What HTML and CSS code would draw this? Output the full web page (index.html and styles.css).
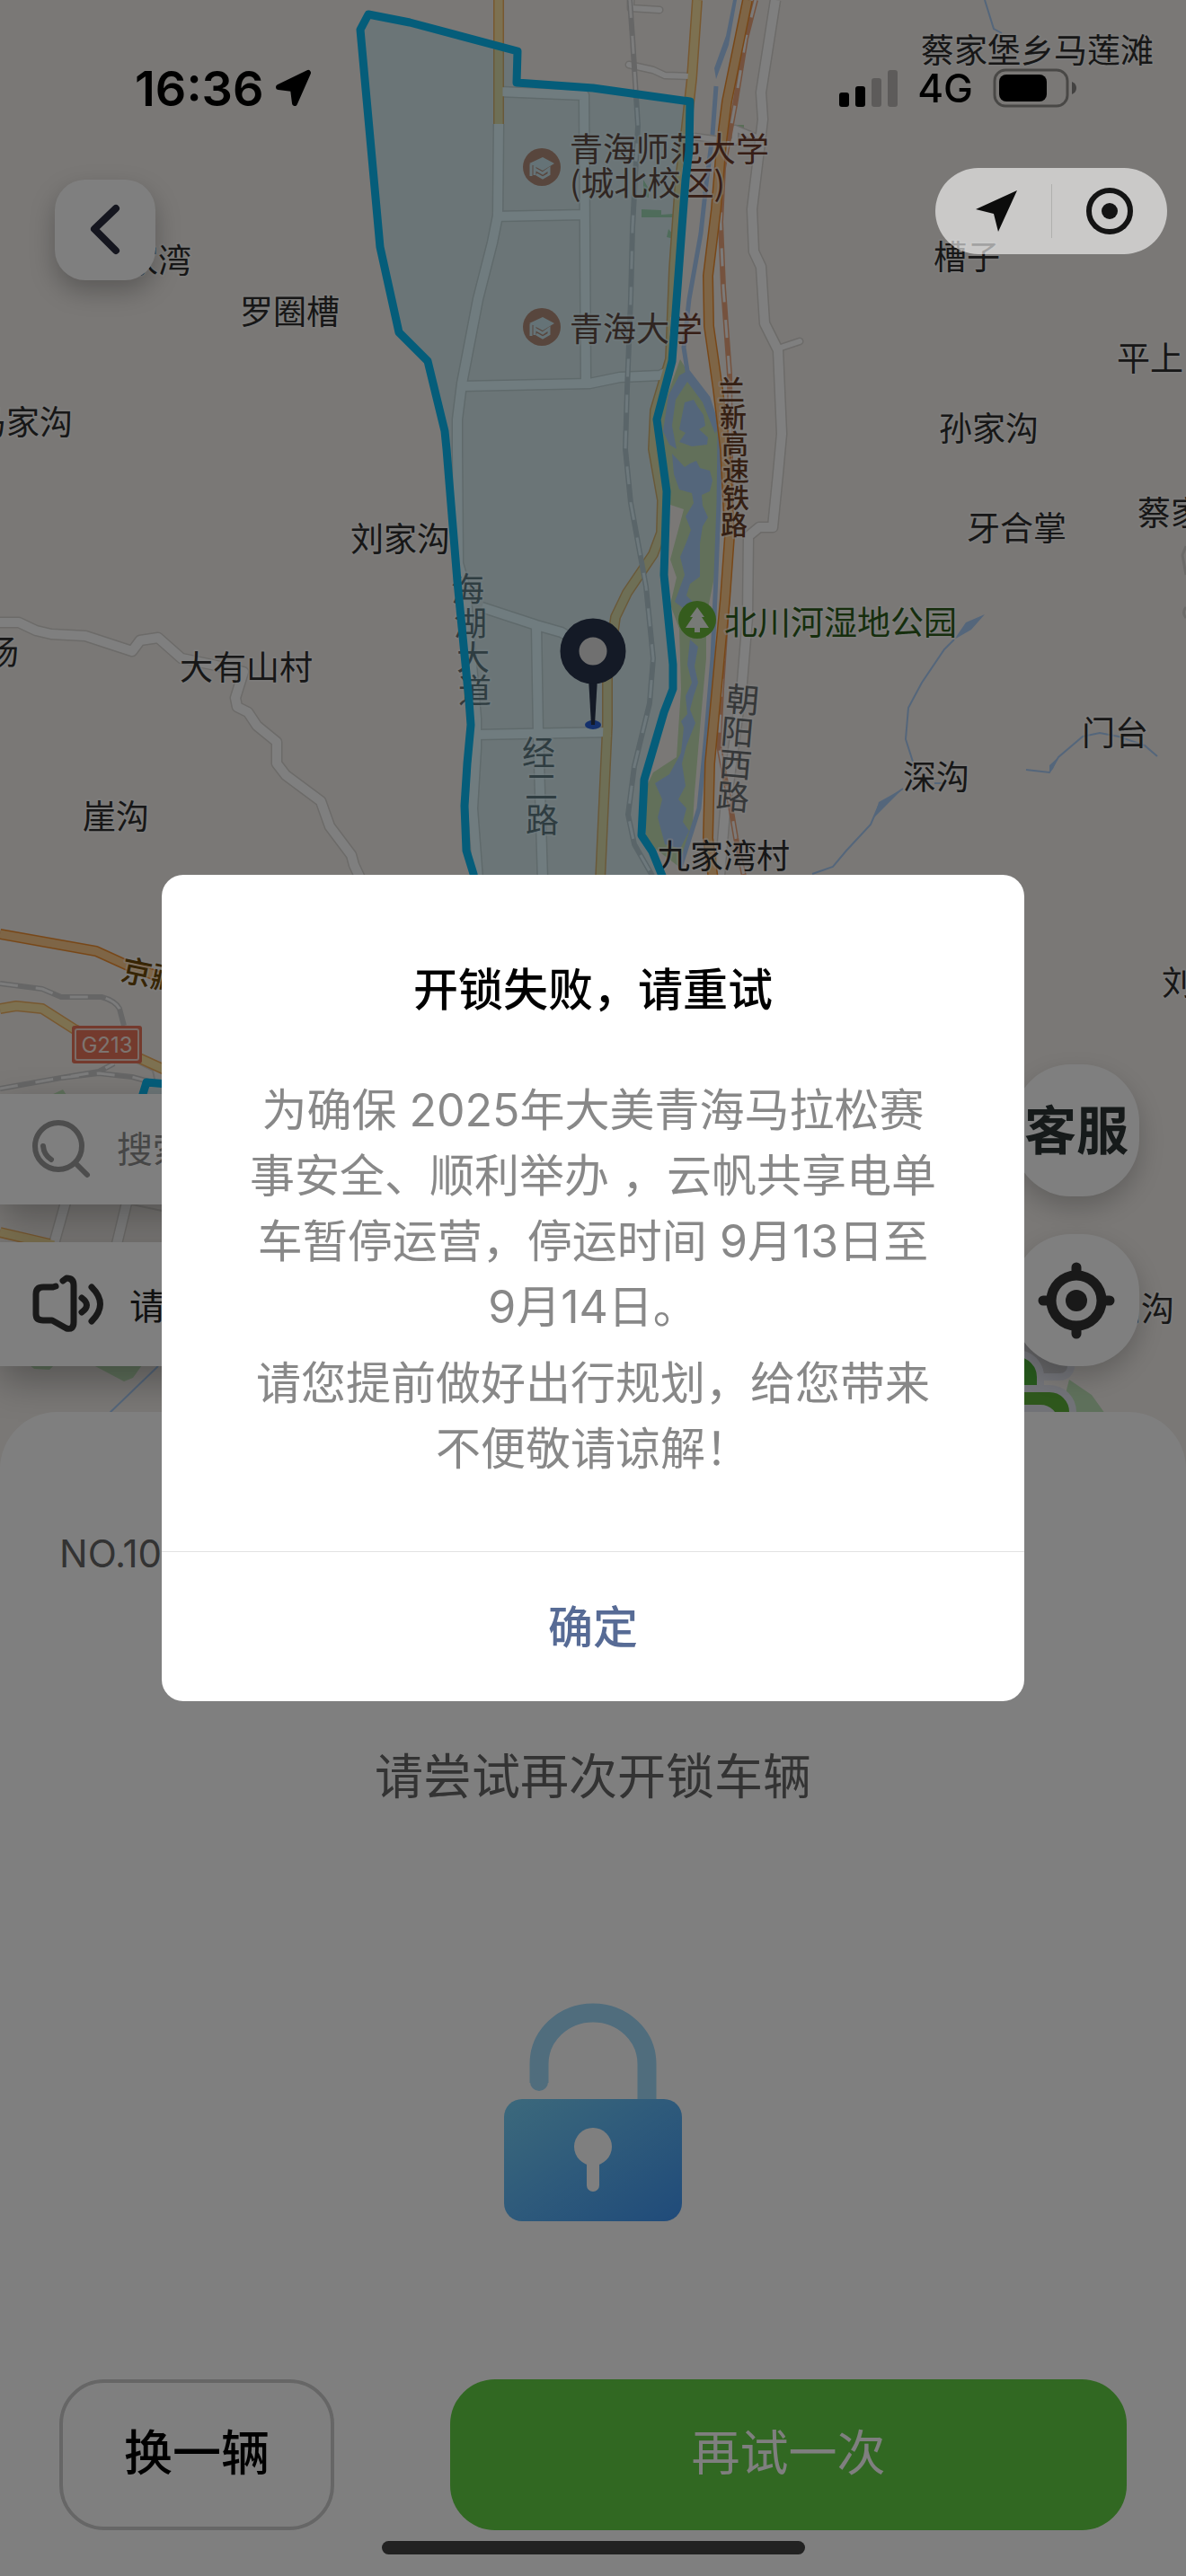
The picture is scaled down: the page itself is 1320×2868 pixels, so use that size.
FILE: index.html
```html
<!DOCTYPE html>
<html lang="zh-CN">
<head>
    <meta charset="UTF-8">
    <meta name="viewport" content="width=device-width, initial-scale=1">
    <title>开锁失败</title>
    <link rel="stylesheet" href="styles.css">
</head>
<body>
<div class="page">
    <main class="map-area">
        <svg class="map" viewBox="0 0 1320 1636" preserveAspectRatio="xMidYMin slice">
            <defs>
                <g id="school">
                    <circle r="21" fill="#c98468"/>
                    <path d="M-14 -4 L1 -11 L14 -4 L1 4 Z" fill="#e6ecec"/>
                    <path d="M-12 -3 V10 M-8 -1 V9 M-8 2 L1 7 L8 2 V8 L1 12 L-6 8" fill="none" stroke="#e6ecec" stroke-width="3"/>
                </g>
                <!-- streets: drawn twice, casing then fill -->
                <g id="streets">
                    <path d="M555 138 L554 240 L548 270 L532 333 L514 427 L509 467 V500 L510 627 L518 655 L530 800 V833 L526 900 L532 980"/>
                    <path d="M555 102 L650 106 L652 423 M549 241 L652 239 M514 430 L656 427 L690 420 L735 418 L746 412"/>
                    <path d="M536 676 L597 696 L625 704 L660 725 M597 696 L599 817 L604 980 M530 818 L680 815"/>
                    <path d="M863 0 L847 103 L849 133 L837 233 L839 280 L847 297 L851 360 L866 390 L870 483 L866 527 L860 587 H845 L833 597 L832 687 L826 760 L807 903 L801 975"/>
                    <path d="M0 693 H21 L40 702 L57 706 L95 708 L147 725 L156 713 L176 710 L202 733 L236 740 L271 748 L262 777 L264 787 L276 793 L286 808 L308 826 V850 L318 863 L357 892 L367 920 L391 952 L394 963 L402 980"/>
                    <path d="M74 1335 L60 1385 M142 1335 L130 1385"/>
                </g>
                <g id="lanes">
                    <path d="M702 0 V9 L734 11 M700 72 L727 78 L740 84 L769 85 M866 388 L890 380 M772 152 L818 158 L818 143 L847 155"/>
                </g>
                <g id="yellow">
                    <path d="M555 0 V138"/>
                    <path d="M776 0 L770 87 L763 150 L757 200 L750 300 L746 400 L729 457 L727 500 L737 557 L736 593 L727 617 L698 660 L685 687 L676 753 V807 L668 980"/>
                    <path d="M0 1123 L18 1120 L47 1123 L83 1146 L157 1179 L190 1194 M0 1372 L60 1386"/>
                </g>
                <g id="highway">
                    <path d="M832 0 L809 113 L803 160 L797 233 L788 307 L789 363 L799 433 L807 500 L812 597 L807 667 L799 753 L790 850 L788 933 L794 980"/>
                    <path d="M0 1040 L107 1059 L140 1074 L190 1092"/>
                </g>
                <g id="rail">
                    <path d="M701 0 L704 43 L710 140 L704 253 L702 333 L698 433 L696 500 L702 560 L719 653 L727 733 L723 783 L706 853 L699 907 L706 940 L726 975"/>
                    <path d="M0 1095 L47 1101 L68 1110 H113 Q128 1114 133 1123 L138 1142"/>
                    <path d="M0 1212 L68 1200 L110 1193 L127 1184 M68 1200 L110 1195 L147 1199 L173 1206"/>
                </g>
                <path id="fast-rail" d="M841 0 L830 43 L818 117 L805 187 L802 247 L805 320 L812 417 L814 600 L803 767 L800 830 L814 903 L819 933 L829 980"/>
            </defs>

            <rect width="1320" height="1636" fill="#f4f0ec"/>

            <!-- parks and water -->
            <path d="M757 400 L786 447 L801 483 L800 560 L797 633 L786 687 V733 L780 800 L773 883 L771 917 L757 966 L719 937 V877 L727 860 L753 843 L758 767 L756 700 L746 673 L753 643 L746 623 L761 567 L740 560 L736 500 L732 470 Z" fill="#c4e0b4"/>
            <path d="M714 233 L736 234 V239 L750 238 V242 H714 Z M744 255 L750 262 V266 L742 264 Z M716 200 L722 210 V220 L716 218 Z M818 139 h10 v6 h-10 Z" fill="#b4dcae"/>
            <g fill="#a9ccf6">
                <path d="M820 0 L811 50 L797 88 L795 76 L808 40 L816 0 Z"/>
                <path d="M756 418 L765 413 L786 443 L798 475 L796 483 L782 448 L765 425 L752 445 L748 474 L753 500 L745 495 L738 480 L744 440 Z"/>
                <path d="M762 448 L772 445 L776 452 L783 462 L785 474 L778 478 L788 487 L787 495 L770 497 L756 492 L763 482 L756 478 Z"/>
                <path d="M748 505 L762 520 L768 516 L775 513 L779 521 L790 524 L793 535 L790 547 L781 551 L782 563 L788 576 L782 586 L779 605 V642 L768 650 L764 663 L776 675 L764 680 L751 670 L762 640 L757 620 L763 606 L769 590 L763 575 L772 560 L770 549 L756 545 L750 528 Z"/>
                <path d="M768 712 L777 720 L773 742 L777 760 L772 775 L768 790 L774 805 L764 830 L759 850 L763 875 L755 890 L764 900 L760 915 L767 925 L757 945 L740 940 L732 910 L737 890 L729 872 L745 862 L758 838 L761 810 L758 803 L765 795 L763 775 L770 760 L765 740 Z"/>
                <path d="M1096 684 L1075 693 L1062 712 L1081 701 Z M1005 878 L978 893 L973 910 L984 899 Z M1168 860 V852 L1178 843 L1172 856 Z"/>
            </g>
            <g fill="none" stroke="#a9ccf6">
                <path stroke-width="5" d="M797 96 L793 150 L786 205 L780 260 L767 333 L761 387 L765 413 L788 443 L801 483 L800 560 L797 640 L793 733 L786 817 L778 900 L757 966"/>
                <path stroke-width="2" d="M1096 0 L1106 32 L1115 37 M1062 712 L1051 723 L1026 760 L1011 788 L1008 823 L1016 848 M1040 872 H1050 M1005 878 L978 897 L969 918 L942 947 L927 965 L904 973 M1142 857 L1168 860 L1178 843 L1205 820 L1224 816 L1245 820 L1274 830 L1288 842 M176 1521 L120 1575"/>
            </g>
            <path d="M57 1219 L70 1213 L74 1219 Z M33 1520 H60 L55 1525 L38 1524 Z M104 1520 H158 L148 1534 L138 1538 Z M1190 1536 L1215 1553 L1230 1574 H1180 Z" fill="#bde0b6"/>

            <!-- roads -->
            <g fill="none" stroke-linejoin="round">
                <g stroke="#d9d6d2">
                    <use href="#streets" stroke-width="13"/>
                    <use href="#lanes" stroke-width="9" stroke-linecap="round"/>
                    <path stroke-width="2" d="M147 1341 L185 1349 M148 1181 L170 1192 L173 1206"/>
                </g>
                <use href="#yellow" stroke="#f0b060" stroke-width="12"/>
                <g stroke="#fff">
                    <use href="#streets" stroke-width="10"/>
                    <use href="#lanes" stroke-width="6" stroke-linecap="round"/>
                </g>
                <use href="#yellow" stroke="#fae3a2" stroke-width="9"/>
                <use href="#rail" stroke="#ccc" stroke-width="6"/>
                <use href="#rail" stroke="#f8f8f8" stroke-width="3" stroke-dasharray="20 20"/>
                <use href="#fast-rail" stroke="#eba57c" stroke-width="6"/>
                <use href="#fast-rail" stroke="#f8f4f2" stroke-width="3" stroke-dasharray="20 20"/>
                <use href="#highway" stroke="#f08f30" stroke-width="12"/>
                <use href="#highway" stroke="#fcca8c" stroke-width="9"/>
                <path d="M1320 608 L1316 618 L1320 640 M1320 676 Q1315 682 1320 688" stroke="#d9d6d2" stroke-width="3"/>
            </g>

            <g class="place uni">
                <text x="634" y="180">青海师范大学</text>
                <text x="634" y="218">(城北校区)</text>
                <text x="634" y="380">青海大学</text>
            </g>
            <g class="place street">
                <text x="502 505 508 510" y="670 708 746 783">海湖大道</text>
                <text x="581 584 585" y="852 890 927">经二路</text>
                <text x="807 801 799 796" y="791 827 863 899" rotate="5">朝阳西路</text>
            </g>
            <use href="#school" x="603" y="186"/>
            <use href="#school" x="603" y="364"/>
            <g class="place">
                <text x="213" y="304" text-anchor="end">家湾</text>
                <text x="267" y="361">罗圈槽</text>
                <text x="81" y="484" text-anchor="end">马家沟</text>
                <text x="390" y="614">刘家沟</text>
                <text x="21" y="740" text-anchor="end">场</text>
                <text x="200" y="757">大有山村</text>
                <text x="92" y="923">崖沟</text>
                <text x="1025" y="70">蔡家堡乡马莲滩</text>
                <text x="1039" y="300">槽子</text>
                <text x="1243" y="413">平上</text>
                <text x="1045" y="491">孙家沟</text>
                <text x="1076" y="602">牙合掌</text>
                <text x="1266" y="585">蔡家</text>
                <text x="1005" y="879">深沟</text>
                <text x="1204" y="830">门台</text>
                <text x="731" y="967">九家湾村</text>
                <text x="1293" y="1108">刘</text>
                <text x="1307" y="1471" text-anchor="end">门沟</text>
            </g>
            <g class="place rail-name">
                <text x="799 801 803 804 804 802" y="445 475 505 535 565 595">兰新高速铁路</text>
            </g>
            <text class="place road-name" x="133" y="1091" transform="rotate(12 133 1091)">京藏</text>

            <!-- service zone -->
            <g fill="#0cc2ff" fill-opacity=".12" stroke="#0abaf4" stroke-width="9" stroke-linejoin="round">
                <path d="M401 33 L410 16 L456 25 L576 57 L575 92 L660 98 L768 113 L767 167 L763 200 L759 253 L748 402 L731 467 L742 547 L739 640 L749 740 V767 L739 793 L717 868 L714 930 L726 948 L737 975 L760 1040 H540 L527 973 L519 947 L517 897 L520 850 L524 807 L522 780 L509 647 L497 500 L495 480 L476 402 L444 370 L423 275 Z"/>
                <path d="M156 1228 L163 1205 L210 1209 V1228 Z"/>
            </g>

            <g transform="translate(776 690)">
                <circle r="21" fill="#6ab83a"/>
                <path d="M0 -14 L8 -3 H5 L13 9 H3 V14 H-3 V9 H-13 L-5 -3 H-8 Z" fill="#eef4ec"/>
            </g>
            <text class="place park" x="806" y="707">北川河湿地公园</text>

            <g>
                <rect x="80" y="1142" width="78" height="42" rx="3" fill="#e8745a"/>
                <rect x="84" y="1146" width="70" height="34" rx="2" fill="none" stroke="#f4d8ce" stroke-width="2"/>
                <text class="shield" x="119" y="1172" text-anchor="middle">G213</text>
            </g>

            <!-- parked bikes -->
            <g stroke="#e2e4ee" stroke-width="8">
                <rect x="1130" y="1460" width="62" height="73" rx="12" fill="#c8c8cc"/>
                <rect x="1090" y="1507" width="68" height="90" rx="26" fill="#4cae38"/>
                <rect x="1100" y="1546" width="94" height="90" rx="26" fill="#5cae38"/>
                <rect x="1112" y="1568" width="62" height="60" rx="16" fill="#fff"/>
            </g>

            <!-- centre pin -->
            <ellipse cx="660" cy="807" rx="9" ry="5" fill="#2b62d9"/>
            <path d="M655 755 H665 L662 807 H658 Z" fill="#28344c"/>
            <circle cx="660" cy="725" r="26" fill="#e0e0e0" stroke="#28344c" stroke-width="21"/>
        </svg>

        <button class="back" type="button" aria-label="返回">
            <svg viewBox="0 0 112 112"><path d="M68 32 L44 55 L68 79" fill="none" stroke="#2a2c3e" stroke-width="8" stroke-linecap="round" stroke-linejoin="round"/></svg>
        </button>

        <div class="map-tools">
            <div class="bars">
                <label class="bar search">
                    <svg viewBox="0 0 66 66" fill="none" stroke="#9a9a9a" stroke-width="6" stroke-linecap="round">
                        <circle cx="29" cy="29" r="26"/>
                        <path d="M48 48 L61 61 M12 29 Q13 39 21 44"/>
                    </svg>
                    <input type="search" placeholder="搜索">
                </label>
                <div class="bar notice">
                    <svg viewBox="0 0 80 66" fill="none" stroke="#323232" stroke-width="7" stroke-linecap="round" stroke-linejoin="round">
                        <path d="M26 13 L23 14 H12 Q4 14 4 22 V44 Q4 51 12 51 H22 L38 60 Q46 62 46 53 V12 Q46 4 38 4 L34 7"/>
                        <path d="M55 26 Q66 34 55 42 M66 14 Q85 33 66 52"/>
                    </svg>
                    <span>请</span>
                </div>
            </div>
            <div class="rounds">
                <button class="round" type="button">客服</button>
                <button class="round" type="button" aria-label="定位">
                    <svg viewBox="0 0 86 86" fill="none" stroke="#323232">
                        <circle cx="43" cy="43" r="28" stroke-width="11"/>
                        <path d="M43 6 V14 M43 72 V80 M6 43 H14 M72 43 H80" stroke-width="11" stroke-linecap="round"/>
                        <circle cx="43" cy="43" r="12" fill="#323232" stroke="none"/>
                    </svg>
                </button>
            </div>
        </div>
    </main>

    <section class="sheet">
        <p class="bike-no">NO.10</p>
        <h1>请尝试再次开锁车辆</h1>
        <svg class="lock" viewBox="0 0 198 243">
            <defs>
                <linearGradient id="lock-body" x1="0" y1="0" x2="1" y2="1">
                    <stop offset="0" stop-color="#78d2f8"/>
                    <stop offset="1" stop-color="#4096f4"/>
                </linearGradient>
            </defs>
            <path d="M39 89 V68 A60 57 0 0 1 159 68 V107" fill="none" stroke="#a0dafa" stroke-width="21"/>
            <circle cx="39" cy="88" r="10" fill="#a0dafa"/>
            <rect y="107" width="198" height="136" rx="20" fill="url(#lock-body)"/>
            <circle cx="99" cy="160" r="21" fill="#fff"/>
            <path d="M99 170 V203" stroke="#fff" stroke-width="14" stroke-linecap="round"/>
        </svg>
        <div class="actions">
            <button class="btn" type="button">换一辆</button>
            <button class="btn primary" type="button">再试一次</button>
        </div>
    </section>
</div>

<div class="mask">
    <div class="dialog" role="dialog" aria-labelledby="dialog-title">
        <h2 id="dialog-title">开锁失败，请重试</h2>
        <div class="dialog-text">
            <p>为确保 2025年大美青海马拉松赛事安全、顺利举办 ，云帆共享电单车暂停运营，停运时间 9月13日至9月14日。</p>
            <p>请您提前做好出行规划，给您带来不便敬请谅解！</p>
        </div>
        <button class="confirm" type="button">确定</button>
    </div>
</div>

<header class="status">
    <div class="clock">
        <span>16:36</span>
        <svg viewBox="0 0 42 42"><path d="M37 4 L22 38 L20 22 L4 20 Z" stroke="#000" stroke-width="6" stroke-linejoin="round"/></svg>
    </div>
    <div class="signals">
        <svg class="bars-icon" viewBox="0 0 65 41">
            <rect y="25" width="11" height="16" rx="3"/>
            <rect x="18" y="18" width="11" height="23" rx="3"/>
            <rect x="36" y="9" width="11" height="32" rx="3" opacity=".24"/>
            <rect x="54" width="11" height="41" rx="3" opacity=".24"/>
        </svg>
        <span>4G</span>
        <svg class="battery" viewBox="0 0 94 44">
            <rect x="2" y="2" width="81" height="40" rx="12" fill="none" stroke="#000" stroke-opacity=".4" stroke-width="3"/>
            <rect x="7" y="7" width="53" height="30" rx="8"/>
            <path d="M88 15 Q93 17 93 22 Q93 27 88 29 Z" opacity=".45"/>
        </svg>
    </div>
</header>

<div class="capsule">
    <button type="button" aria-label="位置">
        <svg viewBox="0 0 54 54"><path d="M54 4 L33 50 L28 30 L8 25 Z" fill="#0c0c0c"/></svg>
    </button>
    <button type="button" aria-label="关闭">
        <svg viewBox="0 0 54 54"><circle cx="27" cy="27" r="23" fill="none" stroke="#141414" stroke-width="6"/><circle cx="27" cy="27" r="9" fill="#141414"/></svg>
    </button>
</div>
<div class="home-bar"></div>
</body>
</html>
```

FILE: styles.css
```css
* { box-sizing: border-box; }
body { margin: 0; font-family: Inter, "Noto Sans CJK SC", sans-serif; color: #000; }
h1, h2, p { margin: 0; font-weight: 400; }
button { border: 0; padding: 0; background: none; font: inherit; color: inherit; }
svg { display: block; }

.page { display: flex; flex-direction: column; min-height: 100vh; overflow: hidden; background: #fff; }

/* map */
.map-area { position: relative; flex: 1; display: flex; flex-direction: column; justify-content: space-between; margin-bottom: -64px; padding: 200px 0 115px; }
.map { position: absolute; top: 0; left: 0; width: 100%; height: 100%; }
.place { font-family: "Noto Sans CJK SC", sans-serif; font-size: 37px; fill: #2e2e2e; stroke: #fff; stroke-opacity: .5; stroke-width: 4px; paint-order: stroke; stroke-linejoin: round; }
.uni { fill: #6e3c2c; }
.street { fill: #6c7072; }
.park { fill: #2c5c1a; }
.rail-name { font-size: 30px; font-weight: 500; fill: #6a4028; }
.road-name { font-size: 34px; font-weight: 500; fill: #6e4a08; }
.shield { font-size: 24px; fill: #fbe8e0; }

.back { position: relative; width: 112px; height: 112px; margin-left: 61px; border-radius: 34px; background: #fff; box-shadow: 0 12px 28px rgba(0,0,0,.25); }
.map-tools { position: relative; display: flex; align-items: flex-end; gap: 52px; padding-right: 52px; }
.bars { flex: 1; display: flex; flex-direction: column; gap: 42px; }
.bar { display: flex; align-items: center; padding-left: 36px; background: #fff; font-size: 40px; box-shadow: 0 16px 40px rgba(0,0,0,.3); }
.search { height: 123px; gap: 28px; }
.search svg { width: 66px; height: 66px; }
.search input { flex: 1; border: 0; padding: 0; background: none; font: inherit; }
.search input::placeholder { color: #8c8c8c; }
.notice { height: 138px; gap: 28px; color: #222; }
.notice svg { width: 80px; height: 66px; }
.rounds { display: flex; flex-direction: column; gap: 42px; }
.round { display: flex; align-items: center; justify-content: center; width: 140px; height: 147px; border-radius: 64px; background: #fff; font-size: 58px; font-weight: 700; line-height: 1; white-space: nowrap; color: #2c3434; box-shadow: 0 12px 28px rgba(0,0,0,.2); }
.round svg { width: 86px; height: 86px; }

/* bottom sheet */
.sheet { position: relative; padding: 128px 66px 51px; border-radius: 64px 64px 0 0; background: #fff; }
.bike-no { font-size: 42px; line-height: 60px; color: #666; }
.sheet h1 { margin-top: 179px; font-size: 54px; line-height: 80px; text-align: center; color: #666; }
.lock { width: 198px; height: 243px; margin: 211px auto 176px; }
.actions { display: grid; grid-template-columns: 306px 1fr; gap: 129px; }
.btn { height: 168px; padding-bottom: 12px; border: 4px solid #ccc; border-radius: 50px; font-size: 54px; font-weight: 500; }
.primary { border: 0; background: #62d044; font-weight: 400; color: #fff; }

/* dialog */
.mask { position: fixed; inset: 0; display: flex; align-items: center; justify-content: center; background: rgba(0,0,0,.5); }
.dialog { width: 960px; max-width: 90%; overflow: hidden; border-radius: 24px; background: #fff; text-align: center; }
.dialog h2 { padding-top: 93px; font-size: 50px; font-weight: 500; line-height: 70px; }
.dialog-text { margin-top: 63px; padding: 0 96px 77px; font-size: 50px; line-height: 73px; color: #888; }
.dialog-text p + p { margin-top: 12px; }
.confirm { width: 100%; height: 167px; padding-bottom: 6px; border-top: 1px solid #e2e2e2; font-size: 50px; font-weight: 500; color: #576b95; }

/* system chrome, stays above the mask */
.status { position: fixed; top: 0; left: 0; right: 0; display: flex; justify-content: space-between; align-items: center; height: 196px; padding: 0 121px 0 150px; }
.clock, .signals { display: flex; align-items: center; }
.clock { gap: 12px; font-size: 54px; font-weight: 600; }
.clock svg { width: 42px; height: 42px; }
.signals { gap: 22px; font-size: 44px; font-weight: 500; }
.bars-icon { width: 65px; height: 41px; }
.battery { width: 94px; height: 44px; }
.capsule { position: fixed; top: 187px; right: 21px; display: flex; align-items: center; width: 258px; height: 96px; border-radius: 48px; background: rgba(255,255,255,.6); }
.capsule button { flex: 1; display: flex; align-items: center; justify-content: center; height: 60px; }
.capsule button + button { border-left: 1px solid #b0b0ae; }
.capsule svg { width: 54px; height: 54px; }
.home-bar { position: fixed; left: 0; right: 0; bottom: 24px; width: 471px; height: 15px; margin: 0 auto; border-radius: 8px; background: #222; }
```
